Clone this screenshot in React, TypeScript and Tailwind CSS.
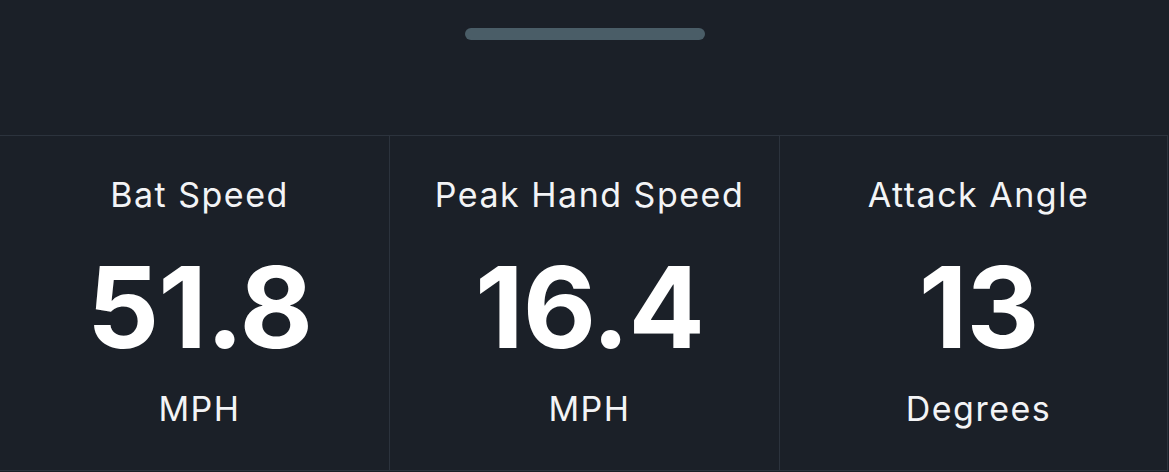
import React from "react";

const stats = [
  { label: "Bat Speed", value: "51.8", unit: "MPH" },
  { label: "Peak Hand Speed", value: "16.4", unit: "MPH" },
  { label: "Attack Angle", value: "13", unit: "Degrees" },
];

export default function App() {
  return (
    <div
      className="w-[1169px] h-[472px] bg-[#1b2028] text-white flex flex-col overflow-hidden"
      style={{ fontFamily: "Inter, 'Noto Sans', sans-serif" }}
    >
      <div className="h-[135px] flex justify-center pt-[28px]">
        <div className="w-[240px] h-[12px] rounded-full bg-[#4a5d67]" />
      </div>
      <div className="grid grid-cols-[390px_390px_388px] w-[1168px] border-t border-b border-[#2c333d]">
        {stats.map((s) => (
          <div
            key={s.label}
            className="flex flex-col items-center pt-[42px] pl-[10px] h-[334px] border-r border-[#2c333d]"
          >
            <div className="text-[34px] leading-none tracking-[1.5px] text-[#f3f4f6]">{s.label}</div>
            <div className="mt-[39px] text-[113px] leading-none font-bold tracking-[-1px]">{s.value}</div>
            <div className="mt-[28px] text-[34px] leading-none tracking-[1.5px] text-[#f3f4f6]">{s.unit}</div>
          </div>
        ))}
      </div>
    </div>
  );
}
